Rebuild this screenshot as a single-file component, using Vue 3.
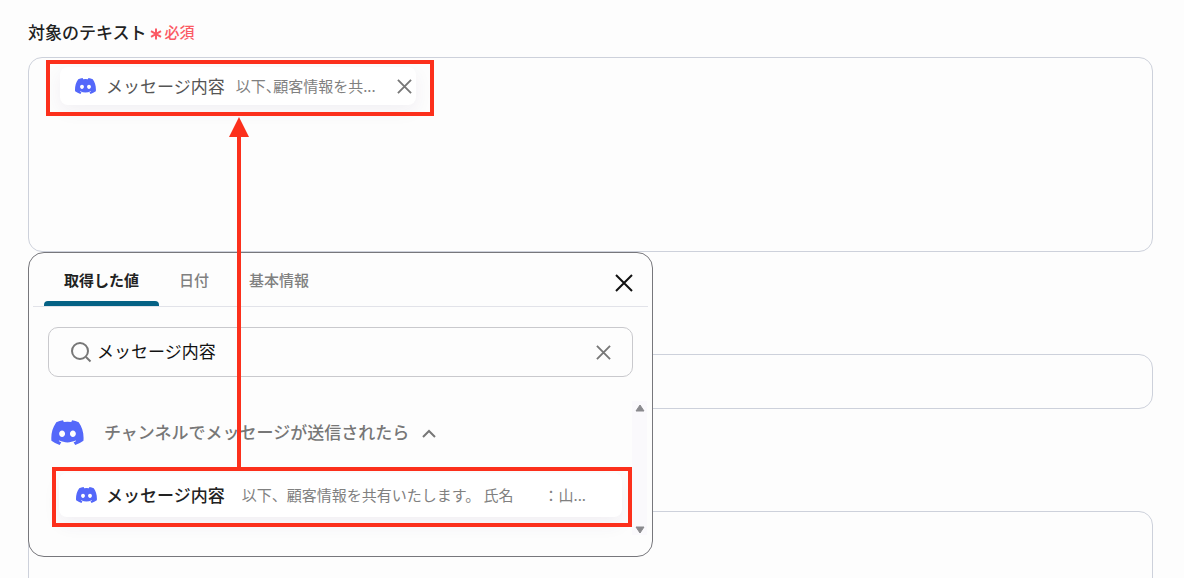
<script setup>
import { ref } from 'vue'

const tabs = ['取得した値', '日付', '基本情報']
const activeTab = ref(0)
const query = ref('メッセージ内容')
const discordPath =
  'M20.3 4.4A19.8 19.8 0 0 0 15.4 2.9c-.2.4-.5.9-.6 1.300a18.300 18.300 0 0 0-5.500 0C9.100 3.800 8.900 3.300 8.700 2.900A19.700 19.700 0 0 0 3.700 4.400C.500 9-.300 13.600.100 18.100a19.900 19.900 0 0 0 6.100 3.100l1.200-2a13 13 0 0 1-1.900-.9l.4-.3c3.900 1.800 8.200 1.800 12.100 0l.4.3c-.6.350-1.200.650-1.900.9l1.200 2a19.800 19.800 0 0 0 6.100-3.100c.5-5.200-.8-9.700-3.500-13.700ZM8 15.300c-1.200 0-2.200-1.100-2.200-2.400s1-2.400 2.200-2.400 2.200 1.100 2.200 2.400-1 2.400-2.200 2.400Zm8 0c-1.200 0-2.200-1.100-2.200-2.400s1-2.400 2.200-2.400 2.200 1.100 2.200 2.400-1 2.400-2.200 2.400Z'
</script>

<template>
  <main class="page">
    <div id="target-label" class="label">
      対象のテキスト
      <span class="required">
        <svg class="asterisk" viewBox="0 0 12 12" aria-hidden="true"><path d="M6 0.500v11M1 3.200l10 5.600M11 3.200l-10 5.600" /></svg>
        必須
      </span>
    </div>

    <div class="anchor">
      <div class="field editor" role="group" aria-labelledby="target-label">
        <div class="chip">
          <svg class="discord small" viewBox="0 2 24 20" aria-hidden="true"><path :d="discordPath" /></svg>
          <span class="chip-name">メッセージ内容</span>
          <span class="chip-preview">以下、顧客情報を共...</span>
          <button class="icon-button" type="button" aria-label="削除">
            <svg class="cross mid" viewBox="0 0 16 16" aria-hidden="true"><path d="M1 1l14 14M15 1L1 15" /></svg>
          </button>
        </div>
      </div>

      <section class="popup">
        <header class="popup-head">
          <div class="tabs" role="tablist">
            <button
              v-for="(tab, i) in tabs"
              :key="tab"
              type="button"
              role="tab"
              class="tab"
              :class="{ active: i === activeTab }"
              :aria-selected="i === activeTab"
              @click="activeTab = i"
            >{{ tab }}</button>
          </div>
          <button class="icon-button" type="button" aria-label="閉じる">
            <svg class="cross large" viewBox="0 0 18 18" aria-hidden="true"><path d="M1 1l16 16M17 1L1 17" /></svg>
          </button>
        </header>

        <div class="search">
          <svg class="magnifier" viewBox="0 0 22 22" aria-hidden="true"><circle cx="10" cy="10" r="8" /><path d="M16 16l4.500 4.500" /></svg>
          <input v-model="query" class="search-input" type="text" aria-label="検索" />
          <button class="icon-button" type="button" aria-label="クリア" @click="query = ''">
            <svg class="cross mid" viewBox="0 0 16 16" aria-hidden="true"><path d="M1 1l14 14M15 1L1 15" /></svg>
          </button>
        </div>

        <div class="results">
          <div class="list">
            <button class="group" type="button" aria-expanded="true">
              <svg class="discord big" viewBox="0 2 24 20" aria-hidden="true"><path :d="discordPath" /></svg>
              <span>チャンネルでメッセージが送信されたら</span>
              <svg class="chevron" viewBox="0 0 14 9" aria-hidden="true"><path d="M1 8l6-6 6 6" /></svg>
            </button>
            <button class="item" type="button">
              <svg class="discord small" viewBox="0 2 24 20" aria-hidden="true"><path :d="discordPath" /></svg>
              <span class="item-name">メッセージ内容</span>
              <span class="item-preview">以下、顧客情報を共有いたします。 氏名　　：山...</span>
            </button>
          </div>
          <div class="scrollbar" aria-hidden="true">
            <svg class="arrow" viewBox="0 0 10 8"><path d="M5 1L9 7H1z" /></svg>
            <svg class="arrow" viewBox="0 0 10 8"><path d="M5 7L1 1h8z" /></svg>
          </div>
        </div>
      </section>
    </div>

    <input class="field line" type="text" aria-label="項目" />
    <textarea class="field area" aria-label="詳細"></textarea>

    <div class="mark mark-target"></div>
    <div class="mark mark-source"></div>
    <svg class="pointer" viewBox="0 0 20 352" aria-hidden="true">
      <path d="M10 0L20 20H0z" /><path d="M8 18h4v334H8z" />
    </svg>
  </main>
</template>

<style>
body {
  background: #fdfdfd;
  overflow: hidden;
}
</style>

<style scoped>
.page {
  position: relative;
  box-sizing: border-box;
  height: 100vh;
  overflow: hidden;
  padding: 20px 31px 0 28px;
  font-family: "Noto Sans CJK JP", sans-serif;
  font-size: 17px;
  line-height: 24px;
  color: #222;
}
button,
input,
textarea {
  font: inherit;
  color: inherit;
  background: none;
  border: 0;
  padding: 0;
  margin: 0;
  outline: 0;
}
svg {
  display: block;
  flex: none;
}
.label {
  display: flex;
  align-items: center;
  gap: 3px;
  margin-bottom: 13px;
  font-weight: 500;
}
.required {
  display: flex;
  align-items: center;
  gap: 3px;
  font-size: 15px;
  color: #fb5a64;
}
.asterisk {
  width: 12px;
  height: 12px;
  margin-top: 3px;
}
.asterisk path {
  fill: none;
  stroke: #fb5a64;
  stroke-width: 2;
}
.anchor {
  position: relative;
}
.field {
  display: block;
  box-sizing: border-box;
  width: 100%;
  border: 1px solid #cdd1db;
  border-radius: 14px;
}
.editor {
  height: 195px;
  padding: 9px 31px;
}
.chip {
  box-sizing: border-box;
  display: inline-flex;
  align-items: center;
  height: 38px;
  padding: 0 4px 0 15px;
  border-radius: 8px;
  background: #fff;
  box-shadow: 0 6px 18px rgba(60, 40, 110, 0.06);
}
.chip-name {
  margin: 0 11px 0 10px;
  color: #555;
}
.chip-preview {
  margin-right: 21px;
  font-size: 15px;
  font-feature-settings: "halt";
  color: #808080;
}
.icon-button {
  display: flex;
  align-items: center;
  justify-content: center;
}
.discord {
  fill: #5468fa;
}
.small {
  width: 21px;
  height: 18px;
}
.big {
  width: 33px;
  height: 27px;
}
.cross {
  fill: none;
  stroke: #777;
  stroke-width: 2;
}
.mid {
  width: 15px;
  height: 15px;
}
.large {
  width: 18px;
  height: 18px;
  stroke: #111;
}
.popup {
  position: absolute;
  z-index: 1;
  top: 100%;
  left: 0;
  box-sizing: border-box;
  width: 625px;
  height: 305px;
  border: 1px solid #77777c;
  border-radius: 16px;
  background: #fdfdfd;
}
.popup-head {
  display: flex;
  align-items: center;
  justify-content: space-between;
  height: 53px;
  margin: 0 4px;
  padding: 0 15px 0 11px;
  border-bottom: 1px solid #e2e3e9;
}
.popup-head .icon-button {
  margin-top: 6px;
}
.tabs {
  display: flex;
  height: 53px;
}
.tab {
  padding: 0 20px;
  font-size: 15px;
  font-weight: 500;
  color: #808080;
  position: relative;
}
.tab.active {
  font-weight: 700;
  color: #222;
}
.tab.active::after {
  content: "";
  position: absolute;
  left: 0;
  right: 0;
  bottom: 0;
  height: 5px;
  border-radius: 4px 4px 0 0;
  background: #056285;
}
.search {
  box-sizing: border-box;
  display: flex;
  align-items: center;
  height: 50px;
  margin: 20px 19px 24px;
  padding: 0 21px 0 21px;
  border: 1px solid #c9c9cd;
  border-radius: 10px;
}
.magnifier {
  width: 22px;
  height: 22px;
}
.magnifier circle,
.magnifier path {
  fill: none;
  stroke: #777;
  stroke-width: 2;
}
.search-input {
  flex: 1;
  min-width: 0;
  margin-left: 5px;
  padding-bottom: 2px;
  color: #111;
}
.results {
  display: flex;
  margin: 0 5px 0 22px;
}
.list {
  flex: 1;
  padding-top: 17px;
}
.group {
  display: flex;
  align-items: center;
  height: 28px;
  color: #777;
  font-weight: 500;
}
.group span {
  margin: 0 13px 0 20px;
}
.chevron {
  width: 14px;
  height: 9px;
  margin-top: 2px;
}
.chevron path {
  fill: none;
  stroke: #777;
  stroke-width: 2;
}
.item {
  box-sizing: border-box;
  display: flex;
  align-items: center;
  width: calc(100% - 18px);
  height: 44px;
  margin: 27px 0 0 8px;
  padding: 0 17px;
  border-radius: 8px;
  background: #fff;
  box-shadow: 0 8px 18px rgba(60, 40, 110, 0.06);
  white-space: nowrap;
}
.item-name {
  margin: 0 17px 0 9px;
  font-weight: 500;
}
.item-preview {
  font-size: 15px;
  color: #808080;
}
.scrollbar {
  display: flex;
  flex-direction: column;
  justify-content: space-between;
  align-items: center;
  width: 15px;
  height: 134px;
  padding: 3px 0 1px;
  box-sizing: border-box;
  background: #faf9fc;
}
.arrow {
  width: 10px;
  height: 8px;
}
.arrow path {
  fill: #8a8a8e;
  stroke: #8a8a8e;
  stroke-width: 1;
  stroke-linejoin: round;
}
.line {
  height: 55px;
  margin-top: 102px;
  padding: 0 16px;
}
.area {
  height: 195px;
  margin-top: 102px;
  padding: 16px;
  resize: none;
}
.mark {
  position: absolute;
  z-index: 2;
  box-sizing: border-box;
  border: 4px solid #fc301c;
  pointer-events: none;
}
.mark-target {
  left: 46px;
  top: 60px;
  width: 388px;
  height: 56px;
}
.mark-source {
  left: 52px;
  top: 467px;
  width: 580px;
  height: 60px;
}
.pointer {
  position: absolute;
  z-index: 2;
  left: 229px;
  top: 117px;
  width: 20px;
  height: 352px;
  fill: #fc301c;
  pointer-events: none;
}
</style>
